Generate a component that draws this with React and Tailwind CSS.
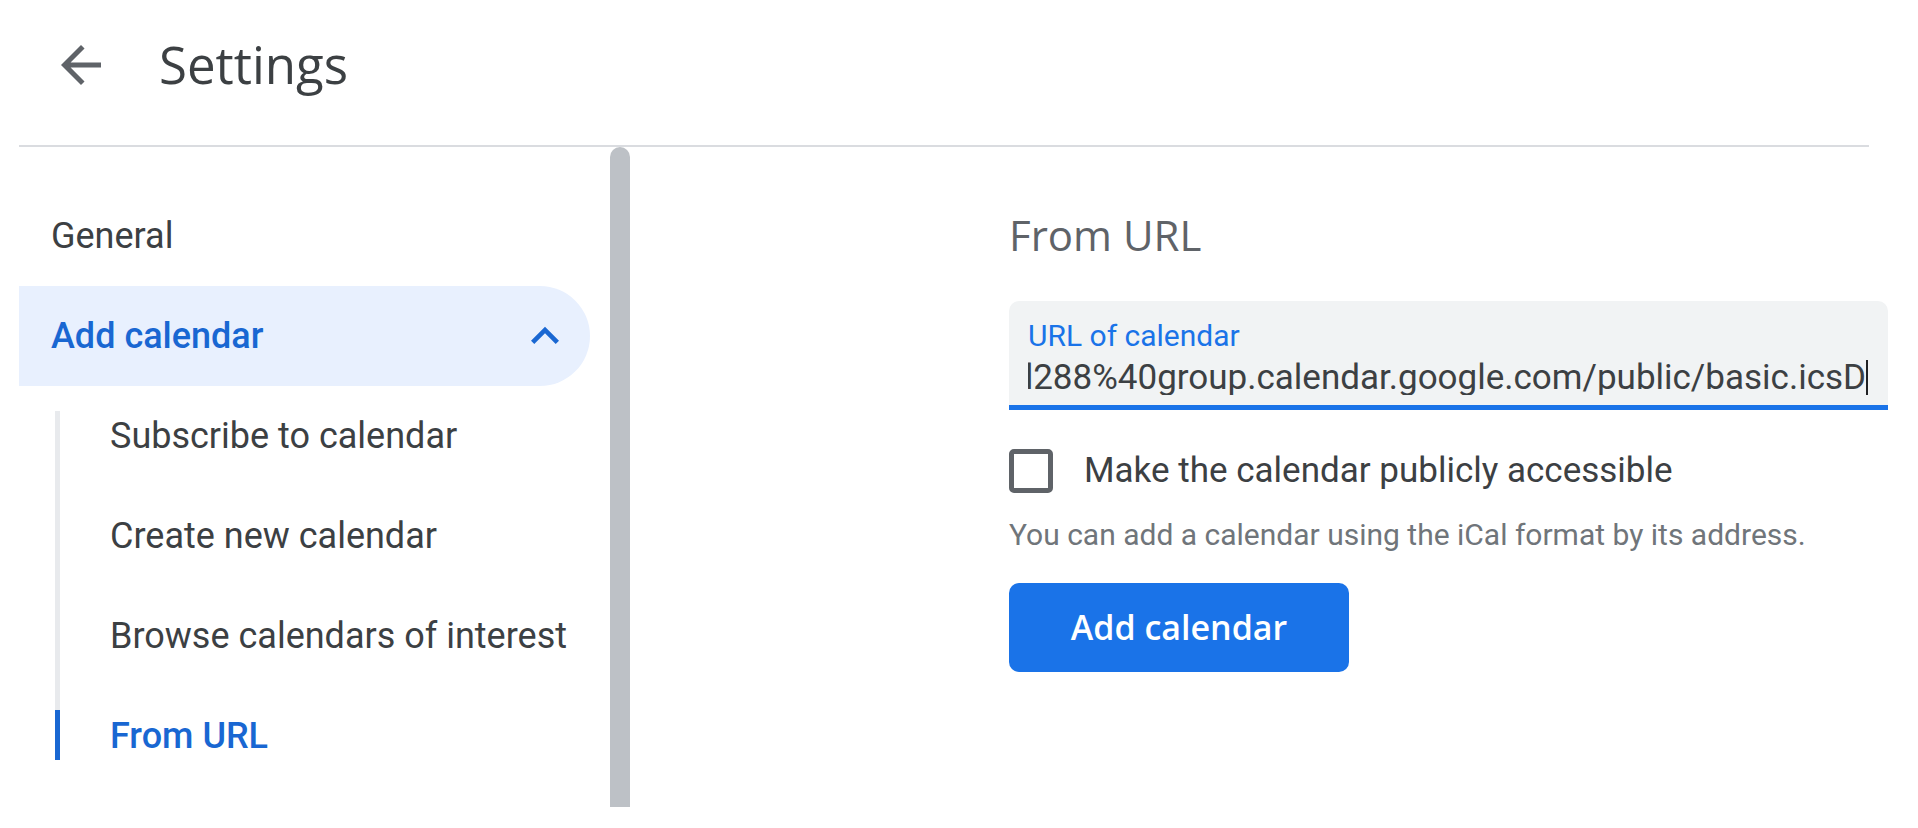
import React from 'react';

const ArrowBack = () => (
    <svg viewBox="0 0 24 24" className="w-[60px] h-[60px]" fill="currentColor">
        <path d="M20 11H7.83l5.59-5.59L12 4l-8 8 8 8 1.41-1.41L7.83 13H20v-2z" />
    </svg>
);

const ExpandLess = () => (
    <svg viewBox="0 0 24 24" className="w-[56px] h-[56px]" fill="currentColor">
        <path d="M12 8l-6 6 1.41 1.41L12 10.83l4.59 4.58L18 14z" />
    </svg>
);

const subItems = [
    { label: 'Subscribe to calendar', line: 'first' },
    { label: 'Create new calendar', line: 'mid' },
    { label: 'Browse calendars of interest', line: 'mid' },
    { label: 'From URL', line: 'active' },
];

const SubItem = ({ label, line }) => (
    <div className="h-[100px] flex">
        <div className="ml-[36px] w-[5px] flex flex-col">
            {line === 'first' && (
                <>
                    <div className="h-[25px]" />
                    <div className="flex-1 bg-[#e8eaed]" />
                </>
            )}
            {line === 'mid' && <div className="flex-1 bg-[#e8eaed]" />}
            {line === 'active' && (
                <>
                    <div className="h-[24px] bg-[#e8eaed]" />
                    <div className="h-[50px] bg-[#1967d2]" />
                </>
            )}
        </div>
        <div
            className={`ml-[50px] flex items-center text-[36px] whitespace-nowrap ${line === 'active' ? 'text-[#1967d2] font-medium' : 'text-[#3c4043]'}`}
        >
            {label}
        </div>
    </div>
);

const App = () => {
    return (
        <div className="w-[1918px] h-[828px] overflow-hidden bg-white font-['Roboto',sans-serif] text-[#3c4043]">
            <header className="h-[145px] flex items-center pb-[16px] pl-[51px]">
                <div className="text-[#5f6368]">
                    <ArrowBack />
                </div>
                <h1 className="ml-[48px] font-['Open_Sans',sans-serif] text-[51px] leading-none text-[#3c4043]">
                    Settings
                </h1>
            </header>
            <div className="ml-[19px] w-[1850px] h-[2px] bg-[#dadce0]" />

            <div className="flex h-[681px]">
                <nav className="ml-[19px] w-[591px] pt-[39px]">
                    <div className="h-[100px] flex items-center pl-[32px] text-[36px] text-[#3c4043]">
                        General
                    </div>
                    <div className="h-[100px] w-[571px] rounded-r-full bg-[#e8f0fe] flex items-center justify-between pl-[32px] pr-[17px] text-[36px] font-medium text-[#1967d2]">
                        <span>Add calendar</span>
                        <ExpandLess />
                    </div>
                    {subItems.map(item => (
                        <SubItem key={item.label} label={item.label} line={item.line} />
                    ))}
                </nav>

                {/* scrollbar thumb */}
                <div className="w-[20px] h-[660px] rounded-t-full bg-[#bdc1c6]" />

                <main className="flex-1 pl-[379px] pt-[67px]">
                    <h2 className="font-['Open_Sans',sans-serif] text-[42px] leading-none text-[#5f6368]">
                        From URL
                    </h2>

                    <div className="mt-[45px] w-[879px] bg-[#f1f3f4] rounded-t-[10px] border-b-[5px] border-[#1a73e8]">
                        <div className="pt-[20px] pl-[19px] pr-[20px] pb-[10px]">
                            <div className="text-[30px] leading-none text-[#1a73e8]">URL of calendar</div>
                            <div className="mt-[9px] h-[35px] flex items-center justify-end overflow-hidden text-[35px] leading-none text-[#3c4043] whitespace-nowrap">
                                <span>https://calendar.google.com/calendar/ical/c_5f3a9e1b7d2c4a6e8b0f1d3c5a7e9b2d4f6a8c0e1b3d5f7a9c2e4b6d8f0a1c3d288%40group.calendar.google.com/public/basic.icsD</span>
                                <span className="w-[2px] h-[40px] shrink-0 bg-[#202124]" />
                            </div>
                        </div>
                    </div>

                    <div className="mt-[39px] flex items-center">
                        <div className="w-[44px] h-[44px] rounded-[5px] border-[5px] border-[#5f6368]" />
                        <span className="ml-[31px] text-[35px] leading-[44px] text-[#3c4043]">
                            Make the calendar publicly accessible
                        </span>
                    </div>

                    <p className="mt-[27px] text-[30px] leading-none text-[#70757a]">
                        You can add a calendar using the iCal format by its address.
                    </p>

                    <button className="mt-[33px] h-[89px] w-[340px] rounded-[10px] bg-[#1a73e8] text-white font-['Open_Sans',sans-serif] font-semibold text-[34px]">
                        Add calendar
                    </button>
                </main>
            </div>
        </div>
    );
};

export default App;
